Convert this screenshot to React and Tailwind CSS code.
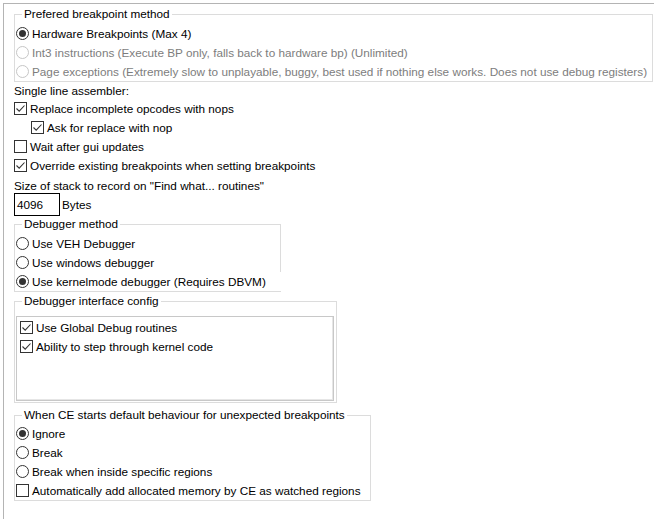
import React from 'react'

const font = { fontFamily: '"Liberation Sans", Arial, sans-serif' }

function Radio({ checked, disabled }) {
  return (
    <span
      className={`relative flex h-[13px] w-[13px] shrink-0 items-center justify-center rounded-full border bg-white ${
        disabled ? 'border-[#c6c6c6]' : 'border-[#333333]'
      }`}
    >
      {checked && <span className="h-[7px] w-[7px] rounded-full bg-[#333333]" />}
    </span>
  )
}

function Check({ checked }) {
  return (
    <span className="flex h-[13px] w-[13px] shrink-0 items-center justify-center border border-[#333333] bg-white">
      {checked && (
        <svg width="11" height="11" viewBox="0 0 11 11">
          <path d="M1.5 5.5 L4.2 8.2 L9.5 2.5" fill="none" stroke="#333333" strokeWidth="1.1" />
        </svg>
      )}
    </span>
  )
}

function RadioRow({ label, checked, disabled, className = '' }) {
  return (
    <div className={`flex h-[19px] items-center gap-[3px] ${className}`}>
      <Radio checked={checked} disabled={disabled} />
      <span className={`whitespace-nowrap ${disabled ? 'text-[#7d7d7d]' : 'text-black'}`}>{label}</span>
    </div>
  )
}

function CheckRow({ label, checked, className = '' }) {
  return (
    <div className={`flex h-[19px] items-center gap-[3px] ${className}`}>
      <Check checked={checked} />
      <span className="whitespace-nowrap text-black">{label}</span>
    </div>
  )
}

function GroupBox({ title, className = '', children }) {
  return (
    <fieldset className={`min-w-0 border border-[#dcdcdc] ${className}`}>
      <legend className="ml-[7px] px-[2px] leading-[16px] text-black">{title}</legend>
      {children}
    </fieldset>
  )
}

export default function App() {
  return (
    <div className="h-[519px] w-[654px] overflow-hidden bg-white pl-[3px] pt-[3px] text-[11.75px]" style={font}>
      <div className="h-full border-l border-t border-[#b4b4b4] pl-[10px] pr-[1px] pt-[2px]">
        {/* Prefered breakpoint method */}
        <GroupBox title="Prefered breakpoint method" className="w-[639px] pt-[2px]">
          <RadioRow className="pl-[1px]" checked label="Hardware Breakpoints (Max 4)" />
          <RadioRow className="pl-[1px]" disabled label="Int3 instructions (Execute BP only, falls back to hardware bp) (Unlimited)" />
          <RadioRow
            className="pl-[1px]"
            disabled
            label="Page exceptions (Extremely slow to unplayable, buggy, best used if nothing else works. Does not use debug registers)"
          />
        </GroupBox>

        <div className="flex h-[17px] items-center">Single line assembler:</div>
        <CheckRow checked label="Replace incomplete opcodes with nops" />
        <CheckRow className="pl-[17px]" checked label="Ask for replace with nop" />
        <CheckRow label="Wait after gui updates" />
        <CheckRow checked label="Override existing breakpoints when setting breakpoints" />

        <div className="mt-[3px] leading-[15px]">Size of stack to record on "Find what... routines"</div>
        <div className="flex items-center gap-[2px]">
          <div className="flex h-[23px] w-[46px] items-center border border-black pl-[2px]">4096</div>
          <span>Bytes</span>
        </div>

        {/* Debugger method */}
        <GroupBox title="Debugger method" className="w-[267px] pt-[2px]">
          <RadioRow className="pl-[1px]" label="Use VEH Debugger" />
          <RadioRow className="pl-[1px]" label="Use windows debugger" />
          <RadioRow className="relative -mr-[8px] bg-white pl-[1px]" checked label="Use kernelmode debugger (Requires DBVM)" />
        </GroupBox>

        {/* Debugger interface config */}
        <GroupBox title="Debugger interface config" className="mt-[1px] w-[323px] pb-[1px] pt-[7px]">
          <div className="ml-[1px] mr-[2px] h-[85px] border border-[#c8c8c8] pl-[3px] pt-[1px] shadow-[inset_-1px_-1px_0_#e6e6e6]">
            <CheckRow checked label="Use Global Debug routines" />
            <CheckRow checked label="Ability to step through kernel code" />
          </div>
        </GroupBox>

        {/* When CE starts */}
        <GroupBox title="When CE starts default behaviour for unexpected breakpoints" className="mt-[4px] w-[357px] pt-[1px]">
          <RadioRow className="pl-[1px]" checked label="Ignore" />
          <RadioRow className="pl-[1px]" label="Break" />
          <RadioRow className="pl-[1px]" label="Break when inside specific regions" />
          <CheckRow className="pl-[1px]" label="Automatically add allocated memory by CE as watched regions" />
        </GroupBox>
      </div>
    </div>
  )
}
